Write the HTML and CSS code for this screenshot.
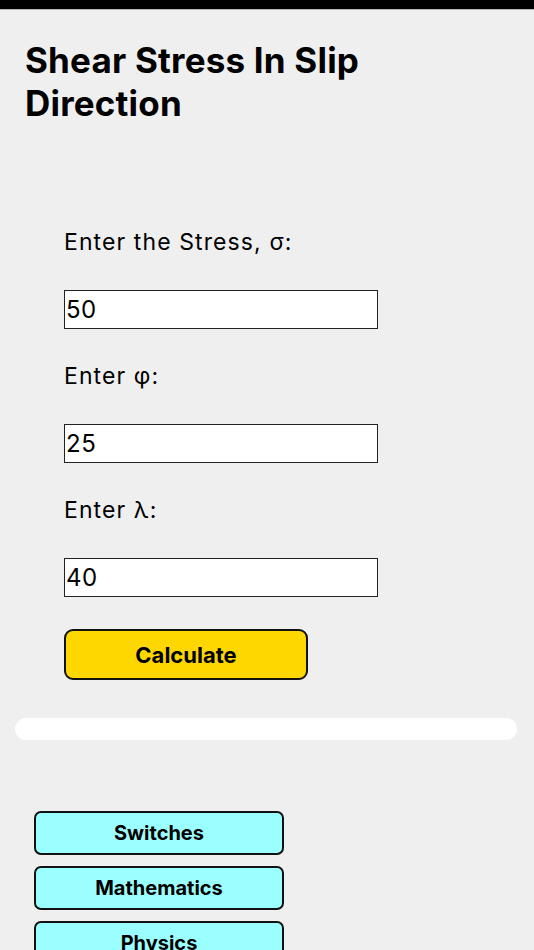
FILE: index.html
```html
<!DOCTYPE html>
<html lang="en">
<head>
    <meta charset="UTF-8">
    <meta name="viewport" content="width=device-width, initial-scale=1.0">
    <title>Shear Stress In Slip Direction</title>
    <link rel="stylesheet" href="styles.css">
</head>
<body>
    <!-- Statusleiste oben -->
    <div id="status-bar"></div>

    <h1 id="title">Shear Stress In Slip Direction</h1>

    <!-- Eingaben -->
    <div class="calc-form">
        <label class="calc-label" for="stress">Enter the Stress, σ:</label>
        <input class="calc-input" id="stress" type="text" value="50">

        <label class="calc-label" for="phi">Enter φ:</label>
        <input class="calc-input" id="phi" type="text" value="25">

        <label class="calc-label" for="lambda">Enter λ:</label>
        <input class="calc-input" id="lambda" type="text" value="40">

        <button class="calc-button" onclick="calculate()">Calculate</button>
    </div>

    <!-- Ergebnis -->
    <div id="result-box"></div>

    <!-- Links zu anderen Rechnern -->
    <div class="nav-container">
        <button class="nav-button">Switches</button>
        <button class="nav-button">Mathematics</button>
        <button class="nav-button">Physics</button>
    </div>

    <script>
        function calculate() {
            const sigma = parseFloat(document.getElementById('stress').value);
            const phi = parseFloat(document.getElementById('phi').value) * Math.PI / 180;
            const lambda = parseFloat(document.getElementById('lambda').value) * Math.PI / 180;
            const tau = sigma * Math.cos(phi) * Math.cos(lambda);
            document.getElementById('result-box').textContent = 'τ = ' + tau.toFixed(3);
        }
    </script>
</body>
</html>
```

FILE: styles.css
```css
/* Grunddesign */
body {
    font-family: Inter, "Noto Sans", sans-serif;
    background-color: #efefef;
    color: #000;
    margin: 0;
    padding: 0;
}

#status-bar {
    height: 9px;
    background-color: #000;
    border-bottom: 1px solid #b5b5b5;
}

#title {
    font-size: 35px;
    font-weight: 700;
    line-height: 43px;
    margin: 29px 0 0 25px;
    width: 400px;
    letter-spacing: 0.2px;
}

/* Eingaben */
.calc-form {
    display: flex;
    flex-direction: column;
    align-items: flex-start;
    padding-left: 64px;
    margin-top: 102px;
}

.calc-label {
    font-size: 23px;
    line-height: 30px;
    letter-spacing: 1.1px;
    margin-bottom: 33px;
}

.calc-input {
    box-sizing: border-box;
    width: 314px;
    height: 39px;
    border: 1px solid #222;
    background-color: #fff;
    font-family: inherit;
    font-size: 24px;
    letter-spacing: 0.5px;
    padding: 0 1px;
    margin-bottom: 32px;
}

.calc-button {
    box-sizing: border-box;
    width: 244px;
    height: 51px;
    background-color: #ffd700;
    border: 2px solid #111;
    border-radius: 9px;
    font-family: inherit;
    font-size: 22px;
    font-weight: 700;
    cursor: pointer;
}

/* Ergebnis */
#result-box {
    background-color: #fff;
    height: 22px;
    margin: 38px 17px 0 15px;
    border-radius: 11px;
}

/* Navigation */
.nav-container {
    display: flex;
    flex-direction: column;
    gap: 11px;
    padding-left: 34px;
    margin-top: 71px;
}

.nav-button {
    box-sizing: border-box;
    width: 250px;
    height: 44px;
    background-color: #9cffff;
    border: 2px solid #111;
    border-radius: 7px;
    font-family: inherit;
    font-size: 20px;
    font-weight: 700;
    cursor: pointer;
}
```
